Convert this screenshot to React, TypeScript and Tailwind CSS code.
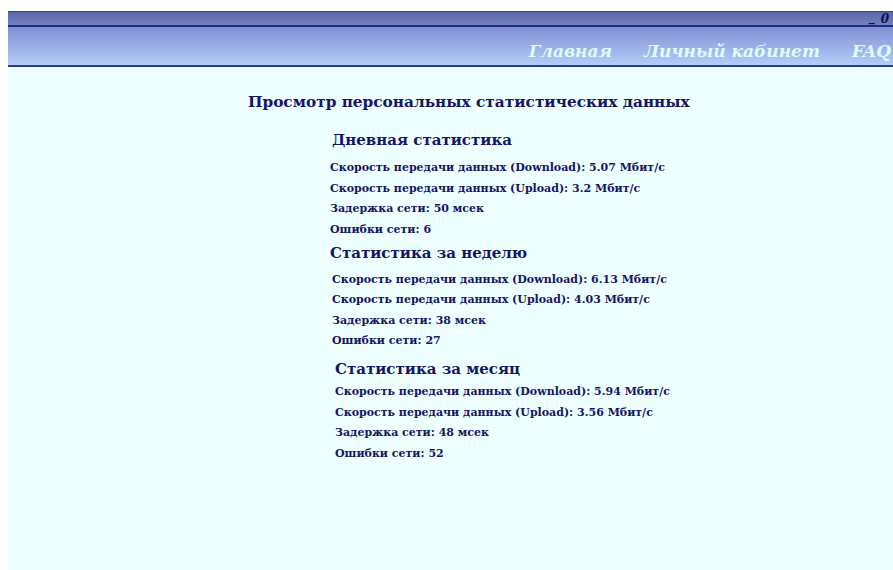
import React from 'react';

type Stat = { title: string; rows: string[]; indent: string; headIndent: string; top: string; gap: string };

const sections: Stat[] = [
  {
    title: 'Дневная статистика',
    indent: 'ml-[322px]',
    headIndent: 'ml-[324px]',
    top: 'mt-[18px]',
    gap: 'mt-[10px]',
    rows: [
      'Скорость передачи данных (Download): 5.07 Мбит/с',
      'Скорость передачи данных (Upload): 3.2 Мбит/с',
      'Задержка сети: 50 мсек',
      'Ошибки сети: 6',
    ],
  },
  {
    title: 'Статистика за неделю',
    indent: 'ml-[324px]',
    headIndent: 'ml-[322px]',
    top: 'mt-[6px]',
    gap: 'mt-[9px]',
    rows: [
      'Скорость передачи данных (Download): 6.13 Мбит/с',
      'Скорость передачи данных (Upload): 4.03 Мбит/с',
      'Задержка сети: 38 мсек',
      'Ошибки сети: 27',
    ],
  },
  {
    title: 'Статистика за месяц',
    indent: 'ml-[327px]',
    headIndent: 'ml-[327px]',
    top: 'mt-[11px]',
    gap: 'mt-[5px]',
    rows: [
      'Скорость передачи данных (Download): 5.94 Мбит/с',
      'Скорость передачи данных (Upload): 3.56 Мбит/с',
      'Задержка сети: 48 мсек',
      'Ошибки сети: 52',
    ],
  },
];

const serif = "font-['DejaVu_Serif','Liberation_Serif',serif]";

export default function App() {
  return (
    <div className={`min-h-screen overflow-hidden bg-white pl-2 pt-[11px] ${serif}`}>
      <div className="flex min-h-[559px] flex-col bg-[#edffff]">
        {/* thin top strip */}
        <div className="flex h-[16px] items-start justify-end border-y border-t-[#3a4488] border-b-2 border-b-[#1c2a8a] bg-gradient-to-b from-[#5c66a6] to-[#7181c2] pr-[4px] text-[12px] font-bold italic leading-[14px] text-[#0d0d50]">
          <span className="mr-[6px] mt-[-2px]">_</span>
          <span>0</span>
        </div>
        {/* navigation */}
        <nav className="flex h-[40px] items-end justify-end gap-8 border-b-2 border-b-[#2a3a8c] bg-gradient-to-b from-[#8191d4] to-[#b3cdf8] pb-[5px] pr-[2px] text-[17px] font-bold italic leading-none text-[#dcfcff]">
          <span>Главная</span>
          <span>Личный кабинет</span>
          <span>FAQ</span>
        </nav>

        <main className="pt-[26px] text-[#151565]">
          <h1 className="ml-[240px] text-[15.3px] font-bold leading-[18px]">
            Просмотр персональных статистических данных
          </h1>
          {sections.map((s) => (
            <section key={s.title} className={s.top}>
              <h2 className={`${s.headIndent} text-[15px] font-bold leading-[22px]`}>{s.title}</h2>
              <div className={`${s.indent} ${s.gap} flex flex-col gap-[7.5px]`}>
                {s.rows.map((r) => (
                  <p key={r} className="text-[11px] font-bold leading-[13px]">
                    {r}
                  </p>
                ))}
              </div>
            </section>
          ))}
        </main>
      </div>
    </div>
  );
}
